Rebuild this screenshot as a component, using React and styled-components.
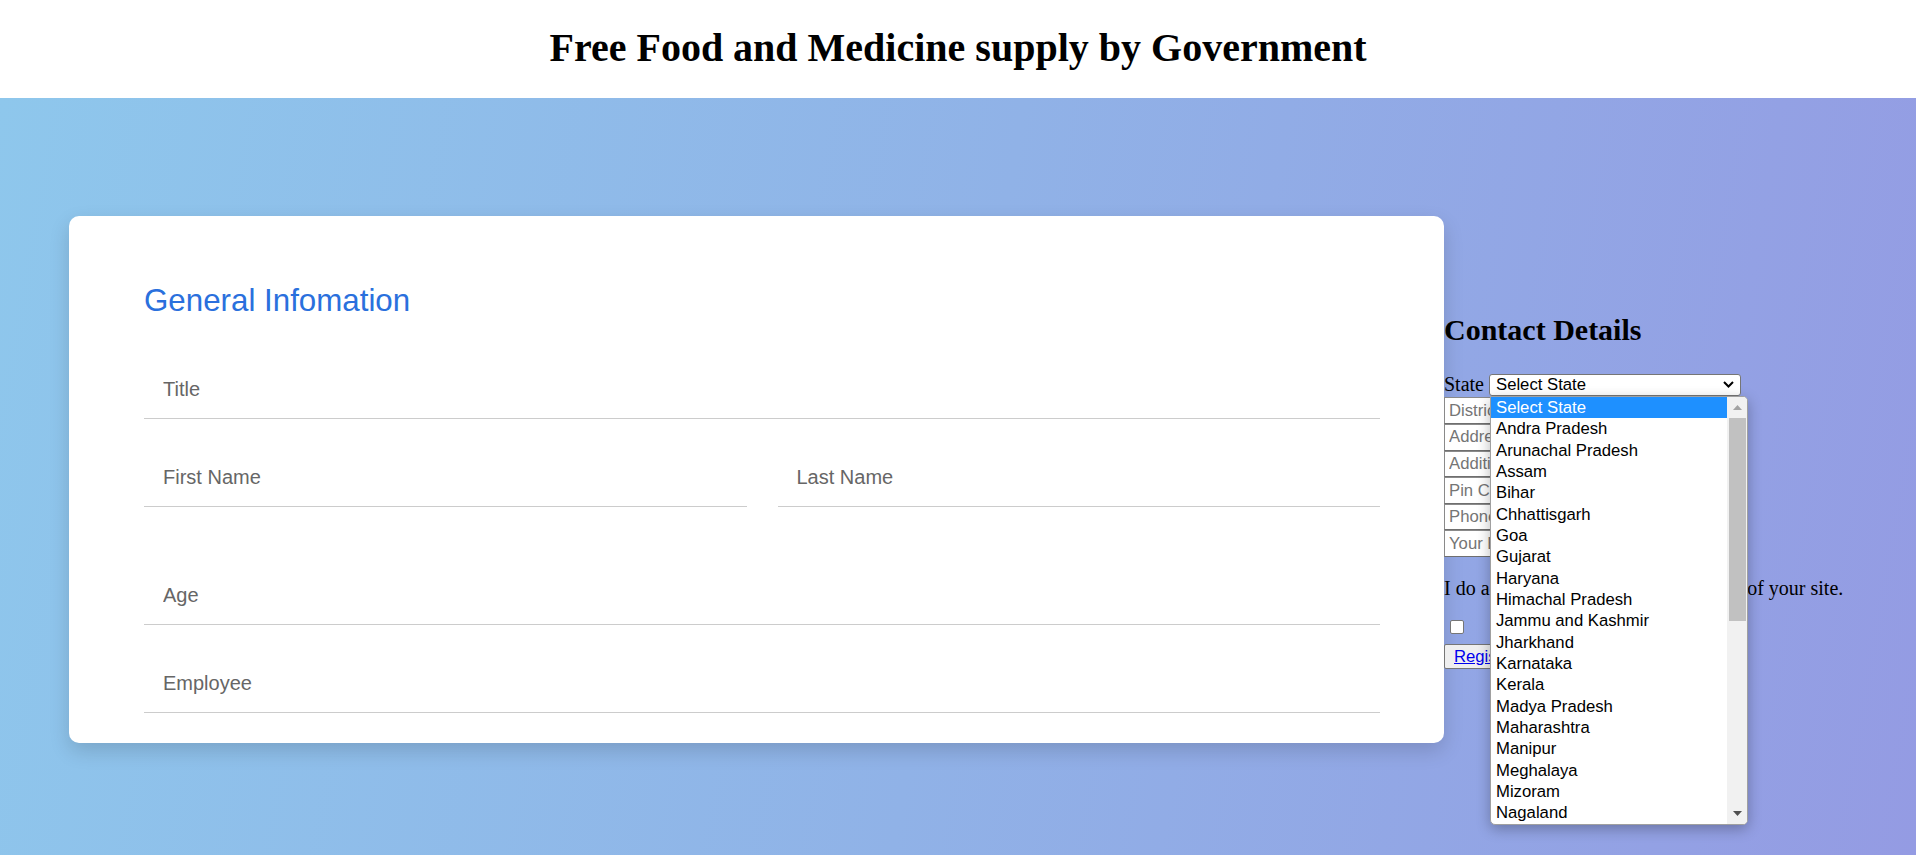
import React from 'react'
import styled, { createGlobalStyle } from 'styled-components'

const GlobalStyle = createGlobalStyle`
  html, body {
    margin: 0;
    padding: 0;
  }
  body {
    font-family: "Liberation Serif", "Times New Roman", serif;
    color: #000;
    overflow: hidden;
  }
`

const Header = styled.header`
  height: 98px;
  box-sizing: border-box;
  padding-top: 25px;
  background: #fff;
  text-align: center;
`
const PageTitle = styled.h1`
  margin: 0;
  font-size: 40px;
  line-height: 46px;
  font-weight: bold;
`

const Main = styled.main`
  min-height: calc(100vh - 98px);
  box-sizing: border-box;
  padding: 118px 0 0 69px;
  background: linear-gradient(100deg, #8ec7ec 0%, #90b2e7 50%, #949be3 100%);
`
const Row = styled.div`
  display: flex;
  align-items: center;
`

/* left card */
const Card = styled.section`
  width: 1375px;
  flex-shrink: 0;
  box-sizing: border-box;
  padding: 67px 64px 30px 75px;
  background: #fff;
  border-radius: 10px;
  box-shadow: 0 8px 20px rgba(0, 0, 0, 0.15);
  font-family: "Liberation Sans", Arial, sans-serif;
`
const CardTitle = styled.h2`
  margin: 0 0 42px;
  font-size: 31.3px;
  line-height: 36px;
  font-weight: normal;
  color: #2a70dd;
`
const Field = styled.input`
  display: block;
  width: 100%;
  height: 58px;
  box-sizing: border-box;
  margin-top: ${p => p.$gap || 0}px;
  padding: 0 19px;
  border: none;
  border-bottom: 1px solid #cccccc;
  outline: none;
  background: transparent;
  font-family: inherit;
  font-size: 20px;
  color: #333;
  &::placeholder {
    color: #666;
  }
`
const FieldRow = styled.div`
  display: grid;
  grid-template-columns: 1fr 1fr;
  column-gap: 31px;
  margin-top: ${p => p.$gap || 0}px;
`

/* right contact details */
const ContactPanel = styled.section`
  flex: 1;
  padding-bottom: 1.3px;
`
const ContactTitle = styled.h2`
  margin: 25px 0;
  font-size: 30px;
  line-height: 34px;
  font-weight: bold;
`
const StateLine = styled.div`
  display: flex;
  align-items: center;
  height: 25px;
  gap: 5px;
  font-size: 20px;
`
const SelectWrap = styled.div`
  position: relative;
`
const SelectBox = styled.div`
  display: flex;
  align-items: center;
  justify-content: space-between;
  width: 252px;
  height: 22px;
  box-sizing: border-box;
  padding: 0 6px;
  border: 1px solid #767676;
  border-radius: 3px;
  background: #fff;
  font-family: "Liberation Sans", Arial, sans-serif;
  font-size: 16.7px;
`
const OptionPopup = styled.div`
  position: absolute;
  top: 100%;
  left: 1px;
  z-index: 10;
  display: flex;
  width: 258px;
  height: 429px;
  box-sizing: border-box;
  border: 1px solid #a0a0a0;
  border-radius: 0 5px 5px 5px;
  background: #fff;
  overflow: hidden;
  box-shadow: 0 4px 14px rgba(0, 0, 0, 0.28);
  font-family: "Liberation Sans", Arial, sans-serif;
  font-size: 16.7px;
`
const OptionList = styled.ul`
  flex: 1;
  margin: 0;
  padding: 0;
  list-style: none;
`
const OptionItem = styled.li`
  height: 21.35px;
  line-height: 21px;
  padding-left: 5px;
  white-space: nowrap;
  background: ${p => (p.$active ? '#1e90ff' : 'transparent')};
  color: ${p => (p.$active ? '#fff' : '#000')};
`
const Scrollbar = styled.div`
  display: flex;
  flex-direction: column;
  width: 20px;
  background: #f1f1f1;
`
const ScrollArrow = styled.div`
  display: flex;
  align-items: center;
  justify-content: center;
  height: 21px;
  flex-shrink: 0;
`
const ScrollThumb = styled.div`
  height: 203px;
  margin: 0 1px 0 2px;
  background: #c1c1c1;
`
const ScrollSpace = styled.div`
  flex: 1;
`
const SmallInput = styled.input`
  display: block;
  width: 192px;
  height: 26.6px;
  box-sizing: border-box;
  margin: 0;
  padding: 0 4px;
  border: 1px solid #8a8a8a;
  border-bottom-color: #6f6f6f;
  background: #fff;
  font-family: "Liberation Sans", Arial, sans-serif;
  font-size: 16.7px;
  &::placeholder {
    color: #757575;
  }
`
const Terms = styled.p`
  margin: 20px 0;
  font-size: 20px;
  line-height: 23px;
`
const CheckLine = styled.div`
  height: 24.3px;
`
const CheckBox = styled.input`
  appearance: none;
  display: block;
  width: 14px;
  height: 14px;
  margin: 3.5px 0 0 6px;
  box-sizing: border-box;
  border: 1px solid #767676;
  border-radius: 2px;
  background: #fff;
`
const RegisterButton = styled.button`
  display: block;
  height: 25px;
  box-sizing: border-box;
  padding: 0 9px;
  border: 1px solid #767676;
  border-radius: 2px;
  background: #efefef;
  font-family: "Liberation Sans", Arial, sans-serif;
  font-size: 16.7px;
`
const RegisterLink = styled.a`
  color: #0000ee;
  text-decoration: underline;
`

const states = [
  'Select State', 'Andra Pradesh', 'Arunachal Pradesh', 'Assam', 'Bihar',
  'Chhattisgarh', 'Goa', 'Gujarat', 'Haryana', 'Himachal Pradesh',
  'Jammu and Kashmir', 'Jharkhand', 'Karnataka', 'Kerala', 'Madya Pradesh',
  'Maharashtra', 'Manipur', 'Meghalaya', 'Mizoram', 'Nagaland',
]

const contactFields = ['District', 'Address', 'Additional Information', 'Pin Code', 'Phone Number', 'Your Email']

const Chevron = () => (
  <svg width="11" height="7" viewBox="0 0 11 7">
    <polyline points="1,1 5.5,5.5 10,1" fill="none" stroke="#000" strokeWidth="2" />
  </svg>
)

const Triangle = ({ down, color }) => (
  <svg width="9" height="5" viewBox="0 0 9 5">
    <polygon points={down ? '0,0 9,0 4.5,5' : '0,5 9,5 4.5,0'} fill={color} />
  </svg>
)

const App = () => {
  return (
    <>
      <GlobalStyle />
      <Header>
        <PageTitle>Free Food and Medicine supply by Government</PageTitle>
      </Header>
      <Main>
        <Row>
          <Card>
            <CardTitle>General Infomation</CardTitle>
            <Field placeholder="Title" />
            <FieldRow $gap={30}>
              <Field placeholder="First Name" />
              <Field placeholder="Last Name" />
            </FieldRow>
            <Field $gap={60} placeholder="Age" />
            <Field $gap={30} placeholder="Employee" />
          </Card>

          <ContactPanel>
            <ContactTitle>Contact Details</ContactTitle>
            <StateLine>
              <span>State</span>
              <SelectWrap>
                <SelectBox>
                  <span>Select State</span>
                  <Chevron />
                </SelectBox>
                <OptionPopup>
                  <OptionList>
                    {states.map((s, i) => (
                      <OptionItem key={s} $active={i === 0}>{s}</OptionItem>
                    ))}
                  </OptionList>
                  <Scrollbar>
                    <ScrollArrow><Triangle color="#a3a3a3" /></ScrollArrow>
                    <ScrollThumb />
                    <ScrollSpace />
                    <ScrollArrow><Triangle down color="#505050" /></ScrollArrow>
                  </Scrollbar>
                </OptionPopup>
              </SelectWrap>
            </StateLine>
            {contactFields.map(f => (
              <SmallInput key={f} placeholder={f} />
            ))}
            <Terms>I do accept the Terms and Conditions of your site.</Terms>
            <CheckLine>
              <CheckBox type="checkbox" />
            </CheckLine>
            <RegisterButton>
              <RegisterLink href="#">Register</RegisterLink>
            </RegisterButton>
          </ContactPanel>
        </Row>
      </Main>
    </>
  )
}

export default App
